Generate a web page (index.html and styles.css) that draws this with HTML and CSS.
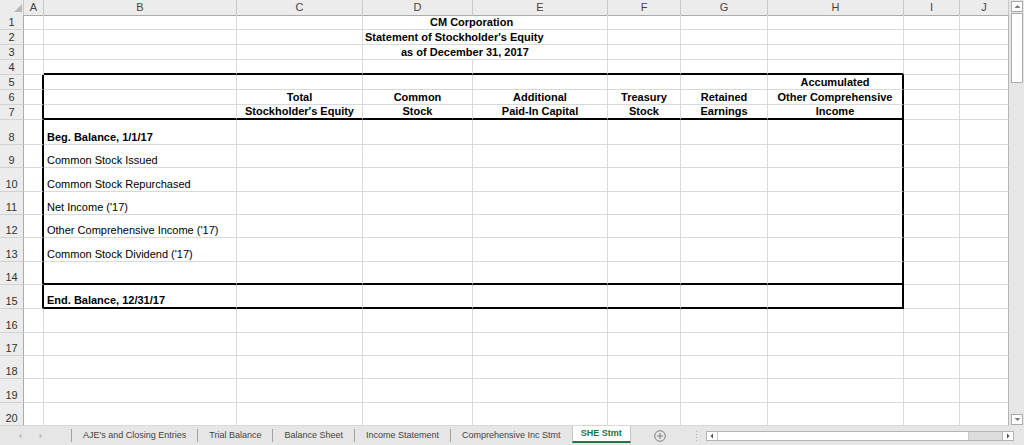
FILE: index.html
```html
<!DOCTYPE html>
<html>
<head>
<meta charset="utf-8">
<title>SHE Stmt</title>
<link rel="stylesheet" href="styles.css">
</head>
<body>
<div class="app">
  <div class="main">
    <div class="sheet">
      <div class="row hh">
        <div class="corner"><svg width="24" height="15" viewBox="0 0 24 15"><polygon points="14,12 22,12 22,4" fill="#b9b9b9"/></svg></div>
        <div class="ch">A</div><div class="ch">B</div><div class="ch">C</div><div class="ch">D</div><div class="ch">E</div><div class="ch">F</div><div class="ch">G</div><div class="ch">H</div><div class="ch">I</div><div class="ch">J</div>
      </div>
      <div class="row h15">
        <div class="rh">1</div><div class="c"></div><div class="c"></div><div class="c"></div><div class="c span2 b t1">CM Corporation</div><div class="c"></div><div class="c"></div><div class="c"></div><div class="c"></div><div class="c last"></div>
      </div>
      <div class="row h15">
        <div class="rh">2</div><div class="c"></div><div class="c"></div><div class="c"></div><div class="c span2 b t2">Statement of Stockholder's Equity</div><div class="c"></div><div class="c"></div><div class="c"></div><div class="c"></div><div class="c last"></div>
      </div>
      <div class="row h15">
        <div class="rh">3</div><div class="c"></div><div class="c"></div><div class="c"></div><div class="c span2 b t3">as of December 31, 2017</div><div class="c"></div><div class="c"></div><div class="c"></div><div class="c"></div><div class="c last"></div>
      </div>
      <div class="row h15">
        <div class="rh">4</div><div class="c"></div><div class="c tb"></div><div class="c tb"></div><div class="c tb"></div><div class="c tb"></div><div class="c tb"></div><div class="c tb"></div><div class="c tb"></div><div class="c"></div><div class="c last"></div>
      </div>
      <div class="row h15">
        <div class="rh">5</div><div class="c tl"></div><div class="c"></div><div class="c"></div><div class="c"></div><div class="c"></div><div class="c"></div><div class="c"></div><div class="c tr ctr b">Accumulated</div><div class="c"></div><div class="c last"></div>
      </div>
      <div class="row h15">
        <div class="rh">6</div><div class="c tl"></div><div class="c"></div><div class="c ctr b">Total</div><div class="c ctr b">Common</div><div class="c ctr b">Additional</div><div class="c ctr b">Treasury</div><div class="c ctr b">Retained</div><div class="c tr ctr b">Other Comprehensive</div><div class="c"></div><div class="c last"></div>
      </div>
      <div class="row h15">
        <div class="rh">7</div><div class="c tl"></div><div class="c tb"></div><div class="c tb ctr b">Stockholder's Equity</div><div class="c tb ctr b">Stock</div><div class="c tb ctr b">Paid-In Capital</div><div class="c tb ctr b">Stock</div><div class="c tb ctr b">Earnings</div><div class="c tb tr ctr b">Income</div><div class="c"></div><div class="c last"></div>
      </div>
      <div class="row h25">
        <div class="rh">8</div><div class="c tl"></div><div class="c lbl b">Beg. Balance, 1/1/17</div><div class="c"></div><div class="c"></div><div class="c"></div><div class="c"></div><div class="c"></div><div class="c tr"></div><div class="c"></div><div class="c last"></div>
      </div>
      <div class="row h23">
        <div class="rh">9</div><div class="c tl"></div><div class="c lbl">Common Stock Issued</div><div class="c"></div><div class="c"></div><div class="c"></div><div class="c"></div><div class="c"></div><div class="c tr"></div><div class="c"></div><div class="c last"></div>
      </div>
      <div class="row h24">
        <div class="rh">10</div><div class="c tl"></div><div class="c lbl">Common Stock Repurchased</div><div class="c"></div><div class="c"></div><div class="c"></div><div class="c"></div><div class="c"></div><div class="c tr"></div><div class="c"></div><div class="c last"></div>
      </div>
      <div class="row h23">
        <div class="rh">11</div><div class="c tl"></div><div class="c lbl">Net Income ('17)</div><div class="c"></div><div class="c"></div><div class="c"></div><div class="c"></div><div class="c"></div><div class="c tr"></div><div class="c"></div><div class="c last"></div>
      </div>
      <div class="row h23">
        <div class="rh">12</div><div class="c tl"></div><div class="c lbl">Other Comprehensive Income ('17)</div><div class="c"></div><div class="c"></div><div class="c"></div><div class="c"></div><div class="c"></div><div class="c tr"></div><div class="c"></div><div class="c last"></div>
      </div>
      <div class="row h24">
        <div class="rh">13</div><div class="c tl"></div><div class="c lbl">Common Stock Dividend ('17)</div><div class="c"></div><div class="c"></div><div class="c"></div><div class="c"></div><div class="c"></div><div class="c tr"></div><div class="c"></div><div class="c last"></div>
      </div>
      <div class="row h23">
        <div class="rh">14</div><div class="c tl"></div><div class="c tb"></div><div class="c tb"></div><div class="c tb"></div><div class="c tb"></div><div class="c tb"></div><div class="c tb"></div><div class="c tb tr"></div><div class="c"></div><div class="c last"></div>
      </div>
      <div class="row h24">
        <div class="rh">15</div><div class="c tl"></div><div class="c tb lbl b">End. Balance, 12/31/17</div><div class="c tb"></div><div class="c tb"></div><div class="c tb"></div><div class="c tb"></div><div class="c tb"></div><div class="c tb tr"></div><div class="c"></div><div class="c last"></div>
      </div>
      <div class="row h24">
        <div class="rh">16</div><div class="c"></div><div class="c"></div><div class="c"></div><div class="c"></div><div class="c"></div><div class="c"></div><div class="c"></div><div class="c"></div><div class="c"></div><div class="c last"></div>
      </div>
      <div class="row h23">
        <div class="rh">17</div><div class="c"></div><div class="c"></div><div class="c"></div><div class="c"></div><div class="c"></div><div class="c"></div><div class="c"></div><div class="c"></div><div class="c"></div><div class="c last"></div>
      </div>
      <div class="row h23">
        <div class="rh">18</div><div class="c"></div><div class="c"></div><div class="c"></div><div class="c"></div><div class="c"></div><div class="c"></div><div class="c"></div><div class="c"></div><div class="c"></div><div class="c last"></div>
      </div>
      <div class="row h24">
        <div class="rh">19</div><div class="c"></div><div class="c"></div><div class="c"></div><div class="c"></div><div class="c"></div><div class="c"></div><div class="c"></div><div class="c"></div><div class="c"></div><div class="c last"></div>
      </div>
      <div class="row h23">
        <div class="rh">20</div><div class="c"></div><div class="c"></div><div class="c"></div><div class="c"></div><div class="c"></div><div class="c"></div><div class="c"></div><div class="c"></div><div class="c"></div><div class="c last"></div>
      </div>
    </div>
    <div class="vscroll">
      <div class="vbtn"><svg width="9" height="9" viewBox="0 0 9 9"><polygon points="1.5,6 7.5,6 4.5,3" fill="#7a7a7a"/></svg></div>
      <div class="vthumb"></div>
      <div class="vtrack"></div>
      <div class="vbtn"><svg width="9" height="9" viewBox="0 0 9 9"><polygon points="1.5,3 7.5,3 4.5,6" fill="#7a7a7a"/></svg></div>
    </div>
  </div>
  <div class="tabbar">
    <div class="nav">
      <svg width="4" height="6" viewBox="0 0 4 6"><polygon points="3.5,0.5 3.5,5.5 0.5,3" fill="#bdbdbd"/></svg>
      <svg width="4" height="6" viewBox="0 0 4 6"><polygon points="0.5,0.5 0.5,5.5 3.5,3" fill="#bdbdbd"/></svg>
    </div>
    <div class="sep"></div>
    <div class="tab">AJE's and Closing Entries</div>
    <div class="sep"></div>
    <div class="tab">Trial Balance</div>
    <div class="sep"></div>
    <div class="tab">Balance Sheet</div>
    <div class="sep"></div>
    <div class="tab">Income Statement</div>
    <div class="sep"></div>
    <div class="tab">Comprehensive Inc Stmt</div>
    <div class="tab active">SHE Stmt</div>
    <svg class="add" width="12" height="12" viewBox="0 0 12 12"><circle cx="6" cy="6" r="5.3" fill="none" stroke="#7f7f7f" stroke-width="1"/><path d="M6 3v6M3 6h6" stroke="#7f7f7f" stroke-width="1"/></svg>
    <svg class="dots" width="3" height="11" viewBox="0 0 3 11"><rect x="1" y="1" width="1" height="1" fill="#b0b0b0"/><rect x="1" y="4" width="1" height="1" fill="#b0b0b0"/><rect x="1" y="7" width="1" height="1" fill="#b0b0b0"/><rect x="1" y="10" width="1" height="1" fill="#b0b0b0"/></svg>
    <div class="hscroll">
      <div class="hbtn left"><svg width="6" height="6" viewBox="0 0 6 6"><polygon points="4,0.5 4,5.5 1.5,3" fill="#555"/></svg></div>
      <div class="hthumb"></div>
      <div class="htrack"></div>
      <div class="hbtn right"><svg width="6" height="6" viewBox="0 0 6 6"><polygon points="2,0.5 2,5.5 4.5,3" fill="#555"/></svg></div>
    </div>
  </div>
</div>
</body>
</html>
```

FILE: styles.css
```css
* {
  box-sizing: border-box;
}

html, body {
  margin: 0;
  padding: 0;
  background: #ffffff;
}

body {
  font-family: "Liberation Sans", Arial, sans-serif;
  font-size: 11px;
  color: #000;
}

.app {
  width: 1024px;
  height: 445px;
  display: flex;
  flex-direction: column;
  overflow: hidden;
}

.main {
  display: flex;
  height: 426px;
}

.sheet {
  width: 1009px;
  display: flex;
  flex-direction: column;
}

.row {
  display: grid;
  grid-template-columns: 24px 20px 193px 126px 110px 135px 73px 87px 136px 56px 49px;
}

.hh { height: 15px; }
.h15 { height: 15px; }
.h23 { height: 23px; }
.h24 { height: 24px; }
.h25 { height: 25px; }

.corner {
  background: #ececec;
  border-right: 1px solid #c8c8c8;
  border-bottom: 1px solid #ababab;
}

.corner svg {
  display: block;
}

.ch {
  background: #ececec;
  border-right: 1px solid #c8c8c8;
  border-bottom: 1px solid #ababab;
  color: #444;
  font-size: 11px;
  line-height: 14px;
  text-align: center;
}

.rh {
  background: #ececec;
  border-right: 1px solid #ababab;
  border-bottom: 1px solid #d2d2d2;
  color: #333;
  font-size: 11px;
  line-height: 13px;
  display: flex;
  align-items: flex-end;
  justify-content: center;
}

.c {
  border-right: 1px solid #d9d9d9;
  border-bottom: 1px solid #d9d9d9;
  display: flex;
  align-items: flex-end;
  line-height: 13px;
  white-space: nowrap;
  font-size: 11px;
  color: #000;
}

.last {
  border-right-color: #b4b4b4;
}

.span2 {
  grid-column: span 2;
}

.b {
  font-weight: bold;
}

.ctr {
  justify-content: center;
}

.lbl {
  padding-left: 3px;
}

.t1 { padding-left: 67px; }
.t2 { padding-left: 2px; }
.t3 { padding-left: 38px; }

.tb {
  border-bottom: 2px solid #000;
}

.tl {
  border-right: 2px solid #000;
}

.tr {
  border-right: 2px solid #000;
}

/* vertical scrollbar */
.vscroll {
  width: 15px;
  background: #e6e6e6;
  display: flex;
  flex-direction: column;
  padding: 1px 1px 1px 2px;
}

.vbtn {
  height: 11px;
  background: #fff;
  border: 1px solid #ababab;
  display: flex;
  align-items: center;
  justify-content: center;
}

.vbtn svg {
  display: block;
}

.vthumb {
  height: 70px;
  margin-top: 1px;
  background: #fff;
  border: 1px solid #ababab;
}

.vtrack {
  flex: 1;
}

/* tab bar */
.tabbar {
  height: 19px;
  background: #e6e6e6;
  display: flex;
  align-items: center;
  font-size: 9px;
  color: #444;
}

.nav {
  width: 71px;
  display: flex;
  align-items: center;
  padding-left: 18px;
  gap: 17px;
}

.nav svg {
  display: block;
}

.sep {
  width: 1px;
  height: 13px;
  background: #a0a0a0;
}

.tab {
  padding: 0 11px;
  white-space: nowrap;
  line-height: 13px;
}

.tab.active {
  align-self: flex-start;
  height: 17px;
  padding: 0 8px;
  background: #fff;
  color: #217346;
  font-weight: bold;
  border-left: 1px solid #c6c6c6;
  border-right: 1px solid #c6c6c6;
  border-bottom: 2px solid #217346;
  display: flex;
  align-items: center;
}

.add {
  display: block;
  margin-left: 23px;
}

.dots {
  display: block;
  margin-left: 29px;
}

.hscroll {
  margin-left: 8px;
  width: 308px;
  height: 10px;
  display: flex;
  background: #dcdcdc;
  border: 1px solid #b4b4b4;
}

.hbtn {
  width: 11px;
  background: #fff;
  display: flex;
  align-items: center;
  justify-content: center;
}

.hbtn svg {
  display: block;
}

.hbtn.left {
  border-right: 1px solid #c8c8c8;
}

.hbtn.right {
  border-left: 1px solid #b4b4b4;
}

.hthumb {
  width: 251px;
  background: #fff;
  border-right: 1px solid #c8c8c8;
}

.htrack {
  flex: 1;
}
```
